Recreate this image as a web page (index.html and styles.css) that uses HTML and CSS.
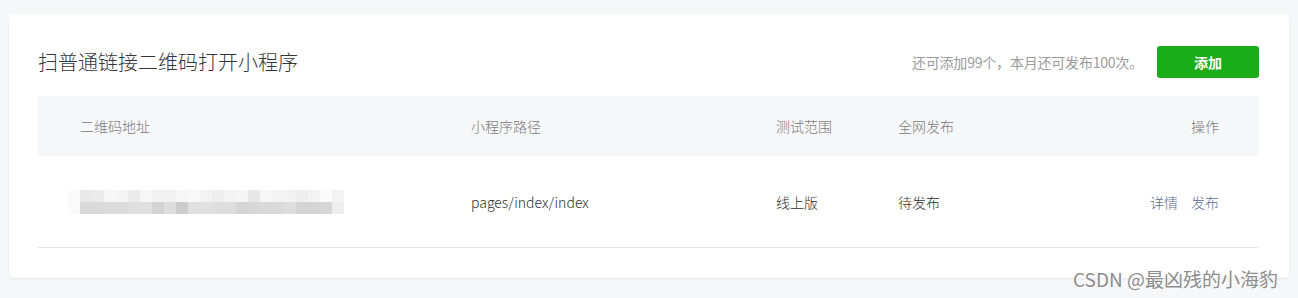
FILE: index.html
```html
<!DOCTYPE html>
<html lang="zh-CN">
<head>
    <meta charset="UTF-8">
    <meta name="viewport" content="width=device-width, initial-scale=1.0">
    <title>扫普通链接二维码打开小程序</title>
    <link rel="stylesheet" href="styles.css">
</head>
<body>
    <div class="card">
        <div class="card-head">
            <h2 class="title">扫普通链接二维码打开小程序</h2>
            <div class="head-right">
                <span class="quota">还可添加99个，本月还可发布100次。</span>
                <button class="add-btn">添加</button>
            </div>
        </div>

        <div class="table">
            <div class="row thead">
                <div>二维码地址</div>
                <div>小程序路径</div>
                <div>测试范围</div>
                <div>全网发布</div>
                <div class="ops">操作</div>
            </div>
            <div class="row tbody">
                <div>
                    <div class="mosaic" id="mosaic"></div>
                </div>
                <div>pages/index/index</div>
                <div>线上版</div>
                <div>待发布</div>
                <div class="ops">
                    <a href="#" class="link">详情</a>
                    <a href="#" class="link">发布</a>
                </div>
            </div>
        </div>
    </div>

    <div class="watermark">CSDN @最凶残的小海豹</div>

    <script>
        // blurred url, two rows of grey cells
        const top_row = ["fafafa","e8e8e8","ebebeb","f7f7f7","f4f4f4","ebebeb","f6f6f6","f2f2f2","f2f2f2","f6f6f6","f8f8f8","f3f3f3","eeeeee","f3f3f3","f5f5f5","e7e7e7","f6f6f6","f3f3f3","f2f2f2","eeeeee","f3f3f3","fbfbfb","f3f3f3"];
        const bottom_row = ["fafafa","d9d9d9","d9d9d9","dbdbdb","dbdbdb","dfdfdf","dfdfdf","d3d3d3","dddddd","cccccc","e0e0e0","e0e0e0","dedede","dedede","d5d5d5","d7d7d7","d9d9d9","d9d9d9","dedede","d4d4d4","d4d4d4","d6d6d6","eeeeee"];
        const mosaic = document.getElementById("mosaic");
        [top_row, bottom_row].forEach(row => {
            row.forEach(c => {
                const cell = document.createElement("span");
                cell.style.background = "#" + c;
                mosaic.appendChild(cell);
            });
        });
    </script>
</body>
</html>
```

FILE: styles.css
```css
body {
    margin: 0;
    padding: 14px 9px;
    background-color: #f6f7f9;
    font-family: "Noto Sans CJK SC", "Open Sans", sans-serif;
    color: #353535;
    font-size: 14px;
}
.card {
    width: 1280px;
    box-sizing: border-box;
    background: #fff;
    border-radius: 4px;
    box-shadow: 0 1px 2px rgba(0, 0, 0, 0.08);
    padding: 32px 30px 30px 29px;
}
.card-head {
    display: flex;
    align-items: center;
    justify-content: space-between;
    margin-bottom: 18px;
}
.title {
    margin: 0;
    font-size: 20px;
    font-weight: 300;
    color: #353535;
    line-height: 32px;
}
.head-right {
    display: flex;
    align-items: center;
}
.quota {
    color: #9a9a9a;
    font-size: 14px;
    letter-spacing: -0.2px;
    margin-right: 14px;
}
.add-btn {
    width: 102px;
    height: 32px;
    background-color: #1aad19;
    color: #fff;
    border: none;
    border-radius: 3px;
    font-family: inherit;
    font-size: 14px;
    font-weight: bold;
    cursor: pointer;
}
.row {
    display: grid;
    grid-template-columns: 391px 305px 122px 1fr auto;
    align-items: center;
    padding: 0 40px 0 42px;
    font-weight: 300;
}
.thead {
    height: 60px;
    background-color: #f6f7f9;
    color: #7a7a7a;
}
.tbody {
    height: 91px;
    border-bottom: 1px solid #e5e5e5;
    color: #2e2e2e;
}
.ops {
    text-align: right;
}
.mosaic {
    display: grid;
    grid-template-columns: repeat(23, 12px);
    grid-auto-rows: 12px;
    margin-left: -12px;
    width: max-content;
}
.link {
    color: #576b95;
    text-decoration: none;
    margin-left: 10px;
}
.watermark {
    position: absolute;
    left: 1073px;
    top: 265px;
    font-size: 19px;
    color: #8c8c8c;
    text-shadow: 1px 1px 1px #fff, 0 0 2px #fff;
    white-space: nowrap;
}
```
